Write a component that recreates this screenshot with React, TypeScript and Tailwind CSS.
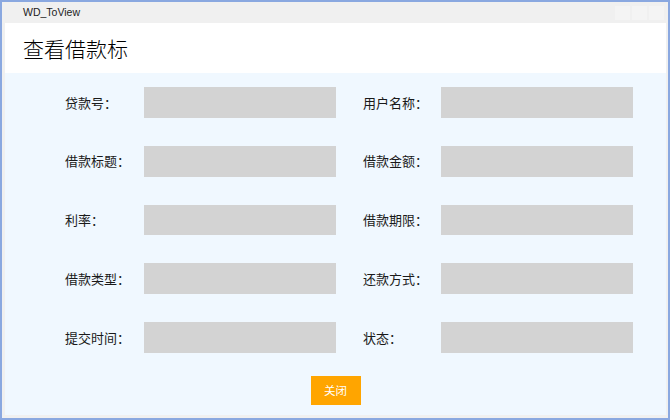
import React from 'react';

const fields: [string, string][] = [
  ['贷款号：', '用户名称：'],
  ['借款标题：', '借款金额：'],
  ['利率：', '借款期限：'],
  ['借款类型：', '还款方式：'],
  ['提交时间：', '状态：'],
];

const Field = ({ label, labelWidth }: { label: string; labelWidth: string }) => (
  <div className="flex items-center">
    <span className={`${labelWidth} text-[13px] text-[#1a1a1a]`}>{label}</span>
    <div className="w-[192px] h-[30.75px] bg-[#d3d3d3]" />
  </div>
);

const App = () => {
  return (
    <div
      className="w-[670px] h-[420px] border-2 border-[#8aa8e0] bg-[#f0f0f0] flex flex-col"
      style={{ fontFamily: '"Noto Sans CJK SC", "Liberation Sans", sans-serif' }}
    >
      {/* Title bar */}
      <div className="h-[21px] flex items-center pl-[21px] pr-[4px]">
        <span className="text-[10.5px] text-[#222]" style={{ fontFamily: '"Liberation Sans", sans-serif' }}>
          WD_ToView
        </span>
        <div className="ml-auto flex gap-[2px]">
          <div className="w-[15px] h-[14px] bg-[#f4f4f4]" />
          <div className="w-[15px] h-[14px] bg-[#f4f4f4]" />
          <div className="w-[15px] h-[14px] bg-[#f4f4f4]" />
        </div>
      </div>

      <div className="flex-1 ml-[3px] mr-[2px] mb-[3px] flex flex-col">
        {/* Header */}
        <div className="h-[50px] bg-white flex items-center pl-[18px]">
          <h1 className="text-[21px] font-light text-black leading-none">查看借款标</h1>
        </div>

        {/* Body */}
        <div className="flex-1 bg-[#f0f8ff] pt-[14px] flex flex-col">
          <div className="flex flex-col gap-[28px] pl-[60px]">
            {fields.map(([a, b]) => (
              <div key={a} className="flex gap-[27px]">
                <Field label={a} labelWidth="w-[79px]" />
                <Field label={b} labelWidth="w-[78px]" />
              </div>
            ))}
          </div>
          <div className="flex justify-center mt-[23px]">
            <button className="w-[50px] h-[29px] bg-[#ffa500] text-white text-[11.5px]">关闭</button>
          </div>
        </div>
      </div>
    </div>
  );
};

export default App;
